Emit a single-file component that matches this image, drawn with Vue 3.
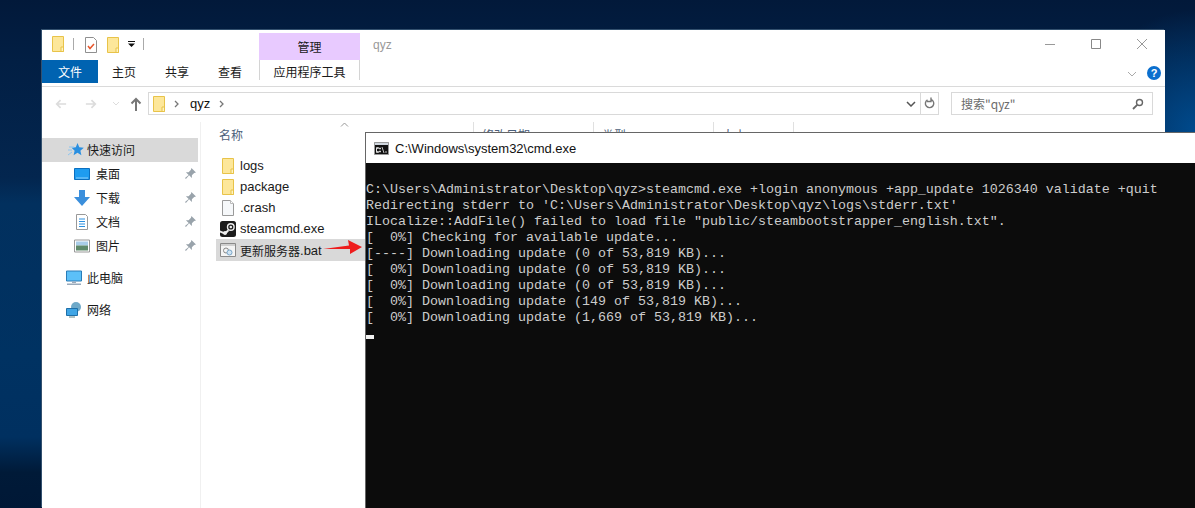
<script setup>
const lines = [
  '',
  'C:\\Users\\Administrator\\Desktop\\qyz>steamcmd.exe +login anonymous +app_update 1026340 validate +quit',
  "Redirecting stderr to 'C:\\Users\\Administrator\\Desktop\\qyz\\logs\\stderr.txt'",
  'ILocalize::AddFile() failed to load file "public/steambootstrapper_english.txt".',
  '[  0%] Checking for available update...',
  '[----] Downloading update (0 of 53,819 KB)...',
  '[  0%] Downloading update (0 of 53,819 KB)...',
  '[  0%] Downloading update (0 of 53,819 KB)...',
  '[  0%] Downloading update (149 of 53,819 KB)...',
  '[  0%] Downloading update (1,669 of 53,819 KB)...',
]
</script>

<template>
  <div class="desktop">
    <section class="explorer">
      <div class="titlebar">
        <div class="qat">
          <svg class="qf" viewBox="0 0 12 16"><path d="M.5.500h11v15H.5z" fill="#fde79a" stroke="#e8c349"/><path d="M9 11h2.500v4.500H9z" fill="#fff3c0" stroke="#e8c349"/></svg>
          <i class="qsep s1"></i>
          <svg class="qf doc" viewBox="0 0 12 16"><path d="M.5.500h8l3 3v12H.5z" fill="#fff" stroke="#8f8f8f"/><path d="M3 9l2 2.500 4-4.500" fill="none" stroke="#e8552a" stroke-width="1.500"/></svg>
          <svg class="qf fold2" viewBox="0 0 12 16"><path d="M.5.500h11v15H.5z" fill="#fde79a" stroke="#e8c349"/><path d="M9 11h2.500v4.500H9z" fill="#fff3c0" stroke="#e8c349"/></svg>
          <svg class="qd" viewBox="0 0 7 6"><path d="M0 0h7v1H0zM0 2.500h7L3.500 6z" fill="#111"/></svg>
          <i class="qsep s2"></i>
        </div>
        <div class="manage">管理</div>
        <div class="wname">qyz</div>
        <div class="wctl">
          <svg viewBox="0 0 12 12"><path d="M1 6.500h10" stroke="#999" fill="none"/></svg>
          <svg viewBox="0 0 12 12"><path d="M1.500 1.500h9v9h-9z" stroke="#888" fill="none"/></svg>
          <svg viewBox="0 0 12 12"><path d="M1 1l10 10M11 1L1 11" stroke="#999" fill="none"/></svg>
        </div>
      </div>
      <div class="ribbon">
        <div class="tab filetab">文件</div>
        <div class="tab">主页</div>
        <div class="tab">共享</div>
        <div class="tab">查看</div>
        <div class="tab tools">应用程序工具</div>
        <div class="rspace"></div>
        <svg class="chev" viewBox="0 0 10 6"><path d="M1 1l4 4 4-4" stroke="#aaa" fill="none"/></svg>
        <div class="help">?</div>
      </div>
      <div class="addr">
        <div class="nav">
          <svg class="arrow" viewBox="0 0 14 12"><path d="M13 6H2M6.500 1.500L2 6l4.500 4.500" stroke="#dcdcdc" stroke-width="2" fill="none"/></svg>
          <svg class="arrow" viewBox="0 0 14 12"><path d="M1 6h11M7.500 1.500L12 6l-4.500 4.500" stroke="#dcdcdc" stroke-width="2" fill="none"/></svg>
          <svg class="small" viewBox="0 0 8 5"><path d="M1 1l3 3 3-3" stroke="#ddd" fill="none"/></svg>
          <svg class="arrow up" viewBox="0 0 12 14"><path d="M6 14V2M1.500 6.500L6 2l4.500 4.500" stroke="#777" stroke-width="2" fill="none"/></svg>
        </div>
        <div class="path">
          <svg class="qf pf" viewBox="0 0 12 16"><path d="M.5.500h11v15H.5z" fill="#fde79a" stroke="#e8c349"/><path d="M9 11h2.500v4.500H9z" fill="#fff3c0" stroke="#e8c349"/></svg>
          <svg class="crumb" viewBox="0 0 5 8"><path d="M1 1l3 3-3 3" stroke="#777" stroke-width="1.300" fill="none"/></svg>
          <span class="crumbtext">qyz</span>
          <svg class="crumb" viewBox="0 0 5 8"><path d="M1 1l3 3-3 3" stroke="#777" stroke-width="1.300" fill="none"/></svg>
          <span class="grow"></span>
          <svg class="pdown" viewBox="0 0 10 6"><path d="M1 1l4 4 4-4" stroke="#555" stroke-width="1.500" fill="none"/></svg>
          <span class="refresh">
            <svg viewBox="0 0 12 13"><path d="M7 2.500a4.200 4.200 0 1 1-3.500.3M7 .5v4H3" stroke="#777" stroke-width="1.400" fill="none"/></svg>
          </span>
        </div>
        <div class="search">
          <span>搜索"qyz"</span>
          <svg viewBox="0 0 12 12"><circle cx="7.500" cy="4.500" r="3" stroke="#666" stroke-width="1.400" fill="none"/><path d="M5.200 6.800L1 11" stroke="#666" stroke-width="1.800"/></svg>
        </div>
      </div>
      <div class="main">
        <aside class="side">
          <div class="sitem head">
            <svg class="ic star" viewBox="0 0 16 16"><path d="M9.500 1l1.800 4.300 4.500.4-3.400 3 1 4.500-3.900-2.400-3.900 2.400 1-4.500-3-3 4.200-.4z" fill="#2a8fe0"/><path d="M1 5h5M0 8h4M0 13l4-3" stroke="#8cc4ef"/></svg>
            快速访问
          </div>
          <div class="sitem sub">
            <svg class="ic" viewBox="0 0 16 14"><path d="M.5 1.500h15v11H.5z" fill="#1e9cf0" stroke="#0b6fc0"/><path d="M2 11h12" stroke="#8fd0fa"/></svg>
            <span class="sname">桌面</span><svg class="pin" viewBox="0 0 12 12"><path d="M7 0l5 5-2 .5-2.500 2.500V11L4.500 8 1 12 0 11l4-3.500L1 4.500h3L6.500 2z" fill="#99a3ab"/></svg>
          </div>
          <div class="sitem sub">
            <svg class="ic" viewBox="0 0 16 16"><path d="M5 0h6v7h5l-8 9-8-9h5z" fill="#3b8fdc"/></svg>
            <span class="sname">下载</span><svg class="pin" viewBox="0 0 12 12"><path d="M7 0l5 5-2 .5-2.500 2.500V11L4.500 8 1 12 0 11l4-3.500L1 4.500h3L6.500 2z" fill="#99a3ab"/></svg>
          </div>
          <div class="sitem sub">
            <svg class="ic" viewBox="0 0 16 16"><path d="M2.500.5h9l2 2v13h-11z" fill="#fff" stroke="#999"/><path d="M5 5h6M5 7.500h6M5 10h6M5 12.500h6" stroke="#2a8fe0"/></svg>
            <span class="sname">文档</span><svg class="pin" viewBox="0 0 12 12"><path d="M7 0l5 5-2 .5-2.500 2.500V11L4.500 8 1 12 0 11l4-3.500L1 4.500h3L6.500 2z" fill="#99a3ab"/></svg>
          </div>
          <div class="sitem sub">
            <svg class="ic" viewBox="0 0 16 13"><path d="M.5.500h15v12H.5z" fill="#fff" stroke="#999"/><path d="M2 2h12v4H2z" fill="#a9cde8"/><path d="M2 6h12v5H2z" fill="#5f8a6b"/></svg>
            <span class="sname">图片</span><svg class="pin" viewBox="0 0 12 12"><path d="M7 0l5 5-2 .5-2.500 2.500V11L4.500 8 1 12 0 11l4-3.500L1 4.500h3L6.500 2z" fill="#99a3ab"/></svg>
          </div>
          <div class="sitem top pc">
            <svg class="ic" viewBox="0 0 16 15"><path d="M.5.500h15v10H.5z" fill="#5cc0f8" stroke="#2a7cb8"/><path d="M6 11h4v1.500H6zM1 13h14v1.500H1z" fill="#9ab"/></svg>
            此电脑
          </div>
          <div class="sitem top net">
            <svg class="ic" viewBox="0 0 16 16"><circle cx="10" cy="5" r="5" fill="#6fa9c8"/><path d="M.5 6.500h11v7H.5z" fill="#3fa5e5" stroke="#1e6fa8"/><path d="M3 15h6" stroke="#688"/></svg>
            网络
          </div>
        </aside>
        <div class="files">
          <div class="colhead">
            <div class="cname">名称<svg class="sort" viewBox="0 0 9 5"><path d="M1 4.500l3.500-3.500L8 4.500" stroke="#999" fill="none"/></svg></div>
            <div class="col date">修改日期</div>
            <div class="col type">类型</div>
            <div class="col size">大小</div>
            <div class="col end"></div>
          </div>
          <div class="row">
            <svg class="fi" viewBox="0 0 12 16"><path d="M.5.500h11v15H.5z" fill="#fde79a" stroke="#e8c349"/><path d="M9 11h2.500v4.500H9z" fill="#fff3c0" stroke="#e8c349"/></svg>logs
          </div>
          <div class="row">
            <svg class="fi" viewBox="0 0 12 16"><path d="M.5.500h11v15H.5z" fill="#fde79a" stroke="#e8c349"/><path d="M9 11h2.500v4.500H9z" fill="#fff3c0" stroke="#e8c349"/></svg>package
          </div>
          <div class="row">
            <svg class="fi" viewBox="0 0 12 16"><path d="M.5.500h8l3 3v12H.5z" fill="#f6f8fa" stroke="#9a9a9a"/><path d="M8.500.5v3h3" fill="#fff" stroke="#bbb"/></svg>.crash
          </div>
          <div class="row">
            <svg class="fi wide" viewBox="0 0 16 16"><rect width="16" height="16" rx="2.500" fill="#1c1c1c"/><circle cx="10.800" cy="6" r="3.300" fill="none" stroke="#eee" stroke-width="1.400"/><circle cx="10.800" cy="6" r="1.300" fill="#eee"/><path d="M0 9.500l4.500 1.800L8 8.500l1 1.500-3 3.200L3.500 13 0 11.500z" fill="#eee"/><circle cx="5" cy="12" r="1.900" fill="#eee"/></svg>steamcmd.exe
          </div>
          <div class="row sel">
            <svg class="fi wide" viewBox="0 0 16 14"><path d="M.5.500h15v13H.5z" fill="#f4f4f4" stroke="#8a8a8a"/><path d="M1 1h14v2H1z" fill="#cfcfcf"/><circle cx="6" cy="7.500" r="2.500" fill="none" stroke="#888"/><circle cx="9.500" cy="9.500" r="2.500" fill="#cfe3f2" stroke="#7aa6c8"/></svg><span class="cjk">更新服务器</span>.bat
          </div>
        </div>
      </div>
    </section>

    <section class="cmd">
      <div class="cmdtitle">
        <svg viewBox="0 0 15 13" class="cmdic"><path d="M.5.500h14v12H.5z" fill="#111" stroke="#999"/><path d="M1 1h13v2H1z" fill="#cfd6de"/><path d="M2.500 5.500h2v1h-2v3h2v1h-2zM5.500 6h1v1h-1zM5.500 9h1v1h-1zM8 5l2 6M11 10h2" stroke="#eee" stroke-width=".8" fill="none"/></svg>
        <span>C:\Windows\system32\cmd.exe</span>
      </div>
      <div class="term">
        <div v-for="(l, i) in lines" :key="i" class="tl">{{ l }}</div>
        <div class="cursor"></div>
      </div>
    </section>

    <svg class="redarrow" viewBox="0 0 39 14"><path d="M0 9L26 5.500 25 0 39 7 27 14 27 9z" fill="#ee1c1c"/></svg>
  </div>
</template>

<style>
html, body { margin: 0; height: 100%; overflow: hidden; }
</style>

<style scoped>
.desktop {
  position: relative; width: 1195px; height: 508px; overflow: hidden;
  background:
    radial-gradient(ellipse 110px 120px at 100% 130px, #004a8c 0, rgba(0, 74, 140, 0) 100%),
    linear-gradient(180deg, #02193a 0, #021f44 12%, #03264f 35%, #02305e 40%, #003262 70%, #003060 86%, #001a38 93%, #001836 100%);
  font-family: "Noto Sans CJK SC", "Liberation Sans", sans-serif;
  color: #1a1a1a;
}
.explorer {
  position: absolute; left: 42px; top: 30px; width: 1123px; height: 478px;
  background: #fff; display: flex; flex-direction: column;
  box-shadow: -1px -1px 0 #33506e;
  font-size: 12px;
}
.titlebar { display: flex; height: 30px; }
.qat { display: flex; align-items: center; width: 217px; padding: 0 0 2px 10px; box-sizing: border-box; }
.qf { width: 12px; height: 16px; flex: none; }
.qsep { width: 1px; height: 12px; background: #aaa; }
.s1 { margin-left: 9px; }
.doc { margin: 2px 0 0 11px; }
.fold2 { margin: 2px 0 0 10px; }
.qd { width: 7px; height: 6px; margin-left: 9px; }
.s2 { margin-left: 8px; }
.manage { width: 101px; height: 27px; margin-top: 3px; background: #e8caff; text-align: center; line-height: 27px; font-size: 12px; }
.wname { margin-left: 13px; color: #999; font: 12px/30px "Liberation Sans", sans-serif; }
.wctl { margin-left: auto; display: flex; gap: 34px; padding: 8px 17px 0 0; }
.wctl svg { width: 12px; height: 12px; }
.ribbon { display: flex; align-items: flex-start; border-bottom: 1px solid #dadada; height: 27px; box-sizing: border-box; }
.tab { width: 53px; padding-right: 1px; box-sizing: border-box; text-align: center; line-height: 24px; height: 23px; }
.tab.filetab { width: 56px; padding-right: 0; background: #0063b1; color: #fff; }
.tab.tools { width: 101px; padding-right: 0; margin-left: 2px; height: 20px; border-left: 1px solid #d4d4d4; border-right: 1px solid #d4d4d4; }
.rspace { flex: 1; }
.chev { width: 10px; height: 6px; margin: 11px 10px 0 0; }
.help { width: 14px; height: 14px; margin: 6px 4px 0 0; border-radius: 50%; background: #0b6fce; color: #fff; font: bold 11px/14px "Liberation Sans", sans-serif; text-align: center; }
.addr { display: flex; height: 35px; box-sizing: border-box; padding: 5px 12px 0 0; }
.nav { display: flex; align-items: center; width: 106px; height: 23px; flex: none; padding-left: 13px; box-sizing: border-box; }
.arrow { width: 12px; height: 12px; flex: none; margin-right: 18px; }
.small { width: 8px; height: 5px; margin-right: 10px; margin-left: -3px; flex: none; }
.arrow.up { width: 12px; height: 14px; margin-right: 0; }
.path {
  display: flex; align-items: center; width: 791px; height: 23px; box-sizing: border-box;
  border: 1px solid #d9d9d9; padding-left: 4px; flex: none;
}
.pf { width: 12px; height: 16px; }
.crumb { width: 5px; height: 8px; margin-left: 9px; }
.crumbtext { margin-left: 11px; font: 13px "Liberation Sans", sans-serif; color: #111; }
.grow { flex: 1; }
.pdown { width: 10px; height: 6px; margin-right: 4px; }
.refresh { width: 17px; height: 21px; border-left: 1px solid #d9d9d9; display: flex; align-items: center; justify-content: center; }
.refresh svg { width: 12px; height: 13px; }
.search {
  margin-left: 12px; width: 202px; height: 23px; box-sizing: border-box; border: 1px solid #d9d9d9;
  display: flex; align-items: center; justify-content: space-between; padding: 0 8px 0 9px; color: #6b6b6b; font-size: 12px;
}
.search svg { width: 12px; height: 12px; }
.main { flex: 1; display: flex; min-height: 0; }
.side { width: 158px; flex: none; border-right: 1px solid #f0f0f0; padding-top: 16px; }
.sitem { display: flex; align-items: center; height: 24px; box-sizing: border-box; padding-bottom: 1px; }
.sitem.head { background: #d9d9d9; padding-left: 26px; margin-right: 2px; }
.sitem.sub { padding-left: 32px; }
.ic { width: 16px; height: 16px; margin-right: 6px; flex: none; }
.star { margin-right: 3px; }
.sname { flex: 1; }
.pin { width: 11px; height: 11px; margin-right: 4px; }
.sitem.top { padding-left: 24px; }
.sitem.top .ic { margin-right: 5px; }
.sitem.pc { margin-top: 8px; }
.sitem.net { margin-top: 8px; }
.files { flex: 1; }
.colhead { display: flex; height: 33px; }
.cname { width: 272px; padding-left: 18px; box-sizing: border-box; line-height: 26px; color: #4c607a; position: relative; height: 26px; }
.sort { position: absolute; left: 139px; top: 0; width: 9px; height: 5px; }
.col { border-left: 1px solid #e0e0e0; height: 26px; box-sizing: border-box; padding-left: 8px; line-height: 26px; color: #4c607a; }
.date { width: 120px; }
.type { width: 120px; }
.size { width: 80px; }
.end { width: 1px; }
.row { display: flex; align-items: center; height: 21px; margin-left: 15px; padding-left: 4px; font: 13px "Liberation Sans", "Noto Sans CJK SC", sans-serif; color: #1a1a1a; width: 145px; }
.fi { width: 12px; height: 16px; margin: 0 6px 0 2px; flex: none; }
.fi.wide { width: 16px; margin: 0 4px 0 0; }
.cjk { font: 12px "Noto Sans CJK SC", sans-serif; }
.row.sel { background: #d9d9d9; height: 22px; }
.redarrow { position: absolute; left: 323px; top: 240px; width: 39px; height: 14px; }
.cmd {
  position: absolute; left: 365px; top: 132px; width: 840px; height: 385px;
  background: #0c0c0c; border-left: 1px solid #666; border-top: 1px solid #666; box-sizing: border-box;
}
.cmdtitle { height: 30px; background: #fff; display: flex; align-items: center; padding-left: 8px; font: 13px "Liberation Sans", sans-serif; color: #111; }
.cmdic { width: 15px; height: 13px; margin-right: 6px; }
.term { padding-top: 3px; font: 13.333px/16px "Liberation Mono", monospace; color: #ccc; white-space: pre; }
.tl { height: 16px; }
.cursor { margin-top: 9px; width: 8px; height: 4px; background: #f2f2f2; }
</style>
